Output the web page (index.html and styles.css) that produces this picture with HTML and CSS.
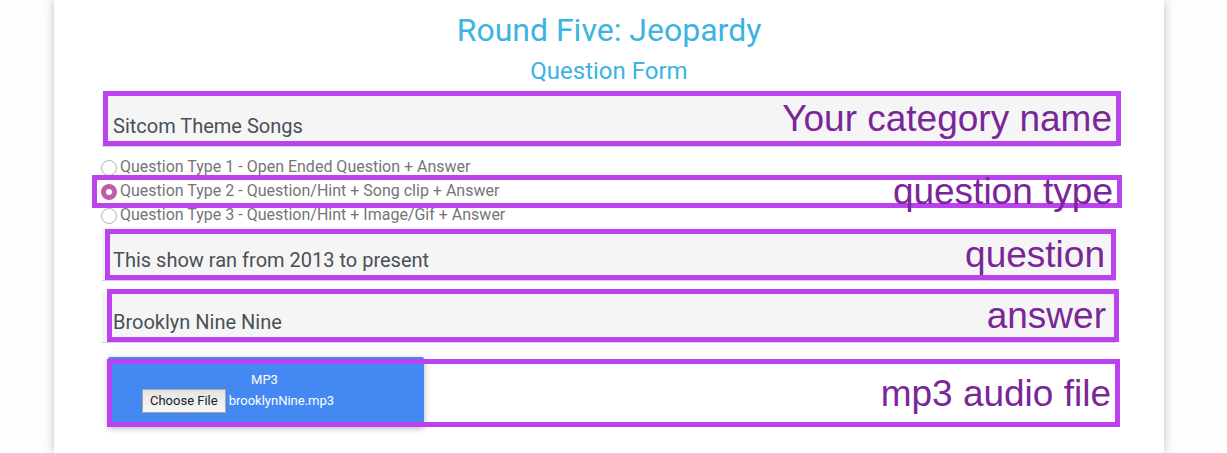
FILE: index.html
```html
<!DOCTYPE html>
<html lang="en">
<head>
<meta charset="utf-8">
<title>Round Five: Jeopardy</title>
<link rel="stylesheet" href="styles.css">
</head>
<body>
<main class="card">
  <h1 class="title">Round Five: Jeopardy</h1>
  <h2 class="subtitle">Question Form</h2>
  <form class="form">
    <div class="row">
      <input class="field" type="text" aria-label="Category name" value="Sitcom Theme Songs">
      <div class="note note-category">Your category name</div>
    </div>
    <div class="types" role="radiogroup" aria-label="Question type">
      <label class="option"><input class="radio" type="radio" name="type"><span>Question Type 1 - Open Ended Question + Answer</span></label>
      <div class="row">
        <label class="option"><input class="radio" type="radio" name="type" checked><span>Question Type 2 - Question/Hint + Song clip + Answer</span></label>
        <div class="note note-type">question type</div>
      </div>
      <label class="option"><input class="radio" type="radio" name="type"><span>Question Type 3 - Question/Hint + Image/Gif + Answer</span></label>
    </div>
    <div class="row">
      <input class="field" type="text" aria-label="Question" value="This show ran from 2013 to present">
      <div class="note note-question">question</div>
    </div>
    <div class="row row-answer">
      <input class="field" type="text" aria-label="Answer" value="Brooklyn Nine Nine">
      <div class="note note-answer">answer</div>
    </div>
    <div class="row row-file">
      <div class="upload">
        <label class="upload-label" for="mp3">MP3</label>
        <div class="picker">
          <input id="mp3" type="file" accept="audio/mpeg" hidden>
          <button class="choose" type="button" onclick="document.getElementById('mp3').click()">Choose File</button>
          <span>brooklynNine.mp3</span>
        </div>
      </div>
      <div class="note note-file">mp3 audio file</div>
    </div>
  </form>
</main>
</body>
</html>
```
FILE: styles.css
```css
* {
  box-sizing: border-box;
}

body {
  margin: 0;
  padding: 0 63px 0 54px;
  background: #fefefe;
  font-family: Roboto, "Liberation Sans", sans-serif;
}

.card {
  min-height: 100vh;
  padding: 8px 48px 24px;
  background: #fff;
  box-shadow: 0 0 10px rgba(0, 0, 0, 0.25);
}

.title,
.subtitle {
  margin: 0;
  color: #3bb4e2;
  font-weight: 400;
  text-align: center;
}

.title {
  font-size: 32px;
  line-height: 44px;
}

.subtitle {
  font-size: 24px;
  line-height: 38px;
}

.form {
  margin-top: 3px;
}

.row {
  position: relative;
}

.row-answer {
  margin-top: 8px;
}

.row-file {
  margin-top: 14px;
  padding-left: 6px;
}

.field {
  display: block;
  width: 100%;
  height: 54px;
  padding: 12px 11px 0;
  border: 0;
  border-bottom: 1px solid #ced4da;
  border-radius: 4px 4px 0 0;
  outline: 0;
  background: #f5f5f5;
  color: #495057;
  font: 20px Roboto, "Liberation Sans", sans-serif;
}

.types {
  margin: 8px 0 0 -1px;
}

.option {
  display: flex;
  align-items: center;
  gap: 3px;
  color: #757575;
  font-size: 16px;
  line-height: 24px;
}

.radio {
  appearance: none;
  width: 16px;
  height: 16px;
  margin: 2px 0 0;
  border: 1px solid #b3b3b3;
  border-radius: 50%;
  background: #fff;
}

.radio:checked {
  border: 5px solid #b95fae;
}

.upload {
  display: flex;
  flex-direction: column;
  width: 316px;
  height: 69px;
  padding: 14px 37px 0 34px;
  border-radius: 2px;
  background: #4489f2;
  box-shadow: 0 2px 6px rgba(0, 0, 0, 0.3);
  color: #fff;
  font-size: 13px;
  line-height: 18px;
}

.upload-label {
  text-align: center;
}

.picker {
  display: flex;
  align-items: center;
  gap: 3px;
}

.choose {
  height: 24px;
  padding: 0 7px 2px;
  border: 1px solid #a6a6a6;
  border-radius: 0;
  background: linear-gradient(#e4e4e4, #f8f8f8);
  color: #222;
  font: 13px Roboto, "Liberation Sans", sans-serif;
}

.note {
  position: absolute;
  display: flex;
  align-items: center;
  justify-content: flex-end;
  padding-right: 4px;
  border: 5px solid #bc42ee;
  color: #7a2699;
  font: 37px/1 "Liberation Sans", Arial, sans-serif;
  white-space: nowrap;
  pointer-events: none;
}

.note-category {
  inset: -2px -5px 1px 1px;
}

.note-type {
  inset: -4px -6px -5px -9px;
}

.note-question {
  inset: 2px 0 1px 3px;
  padding-right: 6px;
}

.note-answer {
  inset: 0 -3px 1px 5px;
  padding-right: 8px;
}

.note-file {
  inset: 2px -4px -1px 5px;
}
```
